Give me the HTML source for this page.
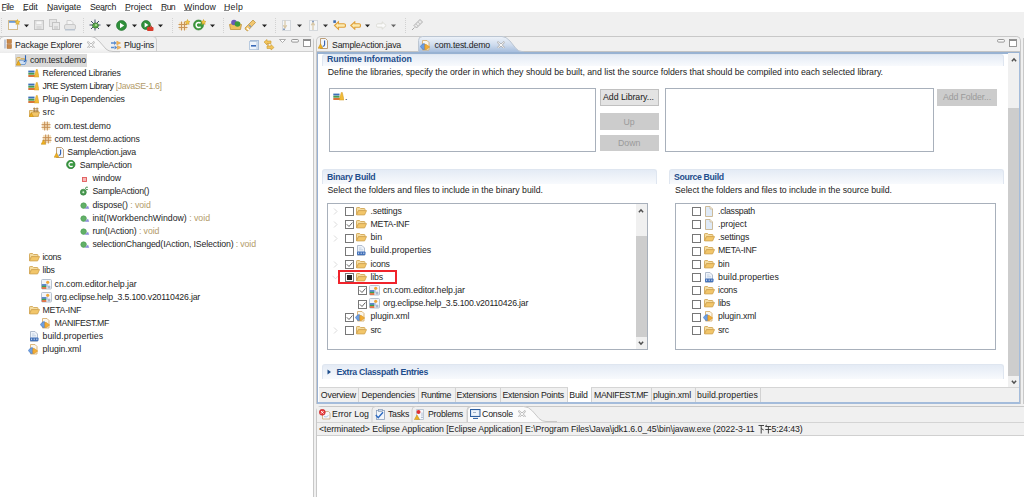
<!DOCTYPE html><html><head><meta charset="utf-8"><style>
html,body{margin:0;padding:0;}
body{width:1024px;height:497px;position:relative;overflow:hidden;background:#f0f0f0;font-family:"Liberation Sans",sans-serif;}
.t{position:absolute;white-space:nowrap;font-size:8.75px;line-height:10px;height:10px;}
#w{position:absolute;left:0;top:0;width:1024px;height:497px;overflow:hidden;}
</style></head><body><div id="w">
<div style="position:absolute;left:0px;top:0px;width:1024px;height:12px;background:#fff;"></div>
<div class="t" style="left:1.5px;top:1.60px;color:#222;letter-spacing:-0.477px;">File</div>
<div class="t" style="left:23px;top:1.60px;color:#222;letter-spacing:-0.12px;">Edit</div>
<div class="t" style="left:47px;top:1.60px;color:#222;letter-spacing:-0.068px;">Navigate</div>
<div class="t" style="left:90px;top:1.60px;color:#222;letter-spacing:-0.289px;">Search</div>
<div class="t" style="left:125px;top:1.60px;color:#222;letter-spacing:-0.033px;">Project</div>
<div class="t" style="left:161px;top:1.60px;color:#222;letter-spacing:-0.688px;">Run</div>
<div class="t" style="left:184px;top:1.60px;color:#222;letter-spacing:0.146px;">Window</div>
<div class="t" style="left:224px;top:1.60px;color:#222;letter-spacing:0.25px;">Help</div>
<div style="position:absolute;left:0px;top:12px;width:1024px;height:24px;background:#f0f0f0;"></div>
<div style="position:absolute;left:1px;top:18px;width:1px;height:1px;background:#d2d2d2;"></div>
<div style="position:absolute;left:1px;top:20px;width:1px;height:1px;background:#d2d2d2;"></div>
<div style="position:absolute;left:1px;top:22px;width:1px;height:1px;background:#d2d2d2;"></div>
<div style="position:absolute;left:1px;top:24px;width:1px;height:1px;background:#d2d2d2;"></div>
<div style="position:absolute;left:1px;top:26px;width:1px;height:1px;background:#d2d2d2;"></div>
<div style="position:absolute;left:1px;top:28px;width:1px;height:1px;background:#d2d2d2;"></div>
<div style="position:absolute;left:1px;top:30px;width:1px;height:1px;background:#d2d2d2;"></div>
<div style="position:absolute;left:1px;top:32px;width:1px;height:1px;background:#d2d2d2;"></div>
<svg style="position:absolute;left:8px;top:19px" width="12" height="12" viewBox="0 0 12 12"><rect x="0.5" y="1.5" width="9" height="9" fill="#f4f8fd" stroke="#d2bb8c"/><rect x="1" y="2" width="8" height="1.8" fill="#6a9ad4"/><path d="M9.5 0.5l0.8 1.8 1.7 0.2-1.3 1.2 0.4 1.8-1.6-0.9-1.6 0.9 0.4-1.8-1.3-1.2 1.7-0.2z" fill="#f5c542" stroke="#c99a20" stroke-width="0.5"/></svg>
<svg style="position:absolute;left:23.5px;top:23.5px" width="6" height="4" viewBox="0 0 6 4"><path d="M0 0.5h5L2.5 3.2z" fill="#222"/></svg>
<svg style="position:absolute;left:34px;top:20px" width="10" height="10" viewBox="0 0 10 10"><rect x="0.5" y="0.5" width="9" height="9" fill="#e6e6e6" stroke="#c4c4c4"/><rect x="2" y="1" width="6" height="3.5" fill="#f7f7f7" stroke="#d0d0d0" stroke-width="0.6"/><rect x="2.5" y="6" width="5" height="3" fill="#d8d8d8"/></svg>
<svg style="position:absolute;left:49px;top:19px" width="11" height="11" viewBox="0 0 11 11"><rect x="0.5" y="0.5" width="7" height="7" fill="#e6e6e6" stroke="#cacaca"/><rect x="3.5" y="3.5" width="7" height="7" fill="#e9e9e9" stroke="#c4c4c4"/><rect x="5" y="7" width="4" height="3" fill="#d5d5d5"/></svg>
<svg style="position:absolute;left:64px;top:20px" width="12" height="11" viewBox="0 0 12 11"><path d="M3 0.5h4l2 2v3H3z" fill="#f4f4f4" stroke="#cfcfcf"/><rect x="0.5" y="4.5" width="11" height="5" rx="1.5" fill="#e4e4e4" stroke="#c8c8c8"/><rect x="1" y="9" width="10" height="1.5" fill="#b9c3cf"/></svg>
<div style="position:absolute;left:83px;top:18px;width:1px;height:1px;background:#d2d2d2;"></div>
<div style="position:absolute;left:83px;top:20px;width:1px;height:1px;background:#d2d2d2;"></div>
<div style="position:absolute;left:83px;top:22px;width:1px;height:1px;background:#d2d2d2;"></div>
<div style="position:absolute;left:83px;top:24px;width:1px;height:1px;background:#d2d2d2;"></div>
<div style="position:absolute;left:83px;top:26px;width:1px;height:1px;background:#d2d2d2;"></div>
<div style="position:absolute;left:83px;top:28px;width:1px;height:1px;background:#d2d2d2;"></div>
<div style="position:absolute;left:83px;top:30px;width:1px;height:1px;background:#d2d2d2;"></div>
<div style="position:absolute;left:83px;top:32px;width:1px;height:1px;background:#d2d2d2;"></div>
<svg style="position:absolute;left:89px;top:19px" width="12" height="12" viewBox="0 0 12 12"><path d="M2 2l8 8M10 2l-8 8M6 0.5v11M0.5 6h11" stroke="#2a3a5a" stroke-width="0.9"/><ellipse cx="6.5" cy="6.5" rx="3" ry="2.6" fill="#5aa84a" stroke="#2e6a2e" stroke-width="0.6"/><circle cx="7" cy="6" r="1" fill="#b8e0a0"/></svg>
<svg style="position:absolute;left:105.5px;top:23.5px" width="6" height="4" viewBox="0 0 6 4"><path d="M0 0.5h5L2.5 3.2z" fill="#222"/></svg>
<svg style="position:absolute;left:116px;top:19.5px" width="11" height="11" viewBox="0 0 11 11"><circle cx="5.5" cy="5.5" r="5" fill="#2f8f3a" stroke="#1f6f2a" stroke-width="0.6"/><path d="M4 2.8v5.4L8.2 5.5z" fill="#fff"/></svg>
<svg style="position:absolute;left:132px;top:23.5px" width="6" height="4" viewBox="0 0 6 4"><path d="M0 0.5h5L2.5 3.2z" fill="#222"/></svg>
<svg style="position:absolute;left:141px;top:19.5px" width="13" height="12" viewBox="0 0 13 12"><circle cx="5" cy="5" r="4.5" fill="#2f8f3a" stroke="#1f6f2a" stroke-width="0.6"/><path d="M3.6 2.6v4.8L7.4 5z" fill="#fff"/><rect x="6" y="7" width="6.5" height="4" rx="1" fill="#d83a2a"/><path d="M8 7V6h2.5v1" stroke="#a02010" fill="none" stroke-width="0.7"/></svg>
<svg style="position:absolute;left:158px;top:23.5px" width="6" height="4" viewBox="0 0 6 4"><path d="M0 0.5h5L2.5 3.2z" fill="#222"/></svg>
<div style="position:absolute;left:172px;top:18px;width:1px;height:1px;background:#d2d2d2;"></div>
<div style="position:absolute;left:172px;top:20px;width:1px;height:1px;background:#d2d2d2;"></div>
<div style="position:absolute;left:172px;top:22px;width:1px;height:1px;background:#d2d2d2;"></div>
<div style="position:absolute;left:172px;top:24px;width:1px;height:1px;background:#d2d2d2;"></div>
<div style="position:absolute;left:172px;top:26px;width:1px;height:1px;background:#d2d2d2;"></div>
<div style="position:absolute;left:172px;top:28px;width:1px;height:1px;background:#d2d2d2;"></div>
<div style="position:absolute;left:172px;top:30px;width:1px;height:1px;background:#d2d2d2;"></div>
<div style="position:absolute;left:172px;top:32px;width:1px;height:1px;background:#d2d2d2;"></div>
<svg style="position:absolute;left:178px;top:19px" width="12" height="12" viewBox="0 0 12 12"><rect x="1" y="3" width="8" height="8" fill="#f6e4c4"/><path d="M3.5 2.5v9M6.5 2.5v9M0.5 5.5h9M0.5 8.5h9" stroke="#c8955a" stroke-width="1"/><path d="M9.5 0.5l0.8 1.8 1.7 0.2-1.3 1.2 0.4 1.8-1.6-0.9-1.6 0.9 0.4-1.8-1.3-1.2 1.7-0.2z" fill="#f5c542" stroke="#c99a20" stroke-width="0.5"/></svg>
<svg style="position:absolute;left:193px;top:19px" width="13" height="12" viewBox="0 0 13 12"><circle cx="5.5" cy="6" r="5" fill="#3d9a3d" stroke="#2a7a2a" stroke-width="0.6"/><path d="M7.6 4.2A2.6 2.6 0 1 0 7.6 7.8" fill="none" stroke="#fff" stroke-width="1.5"/><path d="M10.5 0.5l0.8 1.8 1.7 0.2-1.3 1.2 0.4 1.8-1.6-0.9-1.6 0.9 0.4-1.8-1.3-1.2 1.7-0.2z" fill="#f5c542" stroke="#c99a20" stroke-width="0.5"/></svg>
<svg style="position:absolute;left:209.5px;top:23.5px" width="6" height="4" viewBox="0 0 6 4"><path d="M0 0.5h5L2.5 3.2z" fill="#222"/></svg>
<div style="position:absolute;left:223px;top:18px;width:1px;height:1px;background:#d2d2d2;"></div>
<div style="position:absolute;left:223px;top:20px;width:1px;height:1px;background:#d2d2d2;"></div>
<div style="position:absolute;left:223px;top:22px;width:1px;height:1px;background:#d2d2d2;"></div>
<div style="position:absolute;left:223px;top:24px;width:1px;height:1px;background:#d2d2d2;"></div>
<div style="position:absolute;left:223px;top:26px;width:1px;height:1px;background:#d2d2d2;"></div>
<div style="position:absolute;left:223px;top:28px;width:1px;height:1px;background:#d2d2d2;"></div>
<div style="position:absolute;left:223px;top:30px;width:1px;height:1px;background:#d2d2d2;"></div>
<div style="position:absolute;left:223px;top:32px;width:1px;height:1px;background:#d2d2d2;"></div>
<svg style="position:absolute;left:228.5px;top:19px" width="13" height="12" viewBox="0 0 13 12"><path d="M0.5 5.5l6-2 6 2-1 5h-10z" fill="#f0c060" stroke="#b8862a" stroke-width="0.7"/><circle cx="5" cy="3.5" r="2.8" fill="#6a5ab8"/><circle cx="8.5" cy="5" r="2.8" fill="#3a9a3a"/></svg>
<svg style="position:absolute;left:244px;top:18.5px" width="13" height="13" viewBox="0 0 13 13"><path d="M1.5 10.5l2 1.5 8-8.5-2.5-2.5-8 8z" fill="#f2c770" stroke="#b88a30" stroke-width="0.7"/><path d="M3 9l2 2" stroke="#fff" stroke-width="1.5"/><path d="M5 6l2 2" stroke="#8a9ab0" stroke-width="1.5"/></svg>
<svg style="position:absolute;left:262px;top:23.5px" width="6" height="4" viewBox="0 0 6 4"><path d="M0 0.5h5L2.5 3.2z" fill="#222"/></svg>
<div style="position:absolute;left:275px;top:18px;width:1px;height:1px;background:#d2d2d2;"></div>
<div style="position:absolute;left:275px;top:20px;width:1px;height:1px;background:#d2d2d2;"></div>
<div style="position:absolute;left:275px;top:22px;width:1px;height:1px;background:#d2d2d2;"></div>
<div style="position:absolute;left:275px;top:24px;width:1px;height:1px;background:#d2d2d2;"></div>
<div style="position:absolute;left:275px;top:26px;width:1px;height:1px;background:#d2d2d2;"></div>
<div style="position:absolute;left:275px;top:28px;width:1px;height:1px;background:#d2d2d2;"></div>
<div style="position:absolute;left:275px;top:30px;width:1px;height:1px;background:#d2d2d2;"></div>
<div style="position:absolute;left:275px;top:32px;width:1px;height:1px;background:#d2d2d2;"></div>
<svg style="position:absolute;left:281px;top:19.5px" width="10" height="11" viewBox="0 0 10 11"><rect x="1.5" y="0.5" width="8" height="10" fill="#f4f6f8" stroke="#d4d8dc"/><path d="M4 0.5v6.5M2.3 5.3L4 8l1.7-2.7" fill="#efe6d0" stroke="#d8c8a8" stroke-width="1.2"/><rect x="2" y="8.5" width="2" height="1.5" fill="#8aa0c0"/></svg>
<svg style="position:absolute;left:297px;top:23.5px" width="6" height="4" viewBox="0 0 6 4"><path d="M0 0.5h5L2.5 3.2z" fill="#333"/></svg>
<svg style="position:absolute;left:308px;top:19.5px" width="10" height="11" viewBox="0 0 10 11"><rect x="1.5" y="0.5" width="8" height="10" fill="#f4f6f8" stroke="#d4d8dc"/><path d="M5 10V3.5M3.3 5.2L5 2.5l1.7 2.7" fill="#efe6d0" stroke="#d8c8a8" stroke-width="1.2"/><rect x="4" y="0.8" width="2" height="1.5" fill="#8aa0c0"/></svg>
<svg style="position:absolute;left:323px;top:23.5px" width="6" height="4" viewBox="0 0 6 4"><path d="M0 0.5h5L2.5 3.2z" fill="#333"/></svg>
<svg style="position:absolute;left:333px;top:19.5px" width="13" height="11" viewBox="0 0 13 11"><path d="M1.5 5.5L5.5 1.8v2h5.5q1.5 0 1.5 1.7t-1.5 1.8H5.5v2z" fill="#fbeab0" stroke="#e0a03a" stroke-width="1.1"/><rect x="0.3" y="0.3" width="2.6" height="2.6" fill="#3a6ab0"/></svg>
<svg style="position:absolute;left:349.5px;top:20.5px" width="11" height="9" viewBox="0 0 11 9"><path d="M0.8 4.5L4.8 0.8v2h4.5q1.2 0 1.2 1.7t-1.2 1.7H4.8v2z" fill="#fbeab0" stroke="#e0a03a" stroke-width="1.1"/></svg>
<svg style="position:absolute;left:365px;top:23.5px" width="6" height="4" viewBox="0 0 6 4"><path d="M0 0.5h5L2.5 3.2z" fill="#222"/></svg>
<svg style="position:absolute;left:376px;top:20.5px" width="11" height="9" viewBox="0 0 11 9"><path d="M10.2 4.5L6.2 0.8v2H1.7q-1.2 0-1.2 1.7t1.2 1.7h4.5v2z" fill="#fafafa" stroke="#dcdcd6" stroke-width="1"/></svg>
<svg style="position:absolute;left:391px;top:23.5px" width="6" height="4" viewBox="0 0 6 4"><path d="M0 0.5h5L2.5 3.2z" fill="#666"/></svg>
<div style="position:absolute;left:405px;top:18px;width:1px;height:1px;background:#d2d2d2;"></div>
<div style="position:absolute;left:405px;top:20px;width:1px;height:1px;background:#d2d2d2;"></div>
<div style="position:absolute;left:405px;top:22px;width:1px;height:1px;background:#d2d2d2;"></div>
<div style="position:absolute;left:405px;top:24px;width:1px;height:1px;background:#d2d2d2;"></div>
<div style="position:absolute;left:405px;top:26px;width:1px;height:1px;background:#d2d2d2;"></div>
<div style="position:absolute;left:405px;top:28px;width:1px;height:1px;background:#d2d2d2;"></div>
<div style="position:absolute;left:405px;top:30px;width:1px;height:1px;background:#d2d2d2;"></div>
<div style="position:absolute;left:405px;top:32px;width:1px;height:1px;background:#d2d2d2;"></div>
<svg style="position:absolute;left:411px;top:19px" width="12" height="12" viewBox="0 0 12 12"><path d="M1 11l2.5-2.5" stroke="#aaa" stroke-width="1"/><path d="M3 6.5l2.5 2.5 6-6-2.5-2.5z" fill="#e8e8e8" stroke="#a8a8a8" stroke-width="0.9"/><path d="M5 5l2 2M7 3l2 2" stroke="#b8b8b8" stroke-width="0.7"/></svg>
<div style="position:absolute;left:1.5px;top:10px;width:4px;height:1px;background:#8a8a8a;"></div>
<div style="position:absolute;left:23px;top:10px;width:4px;height:1px;background:#8a8a8a;"></div>
<div style="position:absolute;left:47px;top:10px;width:5px;height:1px;background:#8a8a8a;"></div>
<div style="position:absolute;left:102px;top:10px;width:4px;height:1px;background:#8a8a8a;"></div>
<div style="position:absolute;left:125px;top:10px;width:5px;height:1px;background:#8a8a8a;"></div>
<div style="position:absolute;left:161px;top:10px;width:5px;height:1px;background:#8a8a8a;"></div>
<div style="position:absolute;left:184px;top:10px;width:8px;height:1px;background:#8a8a8a;"></div>
<div style="position:absolute;left:224px;top:10px;width:5px;height:1px;background:#8a8a8a;"></div>
<div style="position:absolute;left:0px;top:36px;width:314px;height:462px;box-sizing:border-box;border:1px solid #c8c8c8;border-left:none;border-bottom:none;border-top-right-radius:5px;background:#fff;"></div>
<div style="position:absolute;left:0px;top:37px;width:313px;height:14px;background:#f0f0f0;"></div>
<div style="position:absolute;left:113px;top:51px;width:200px;height:1px;background:#cfcfcf;"></div>
<svg style="position:absolute;left:0px;top:36px" width="120" height="17" viewBox="0 0 120 17"><defs><linearGradient id="gl" x1="0" y1="0" x2="0" y2="1"><stop offset="0" stop-color="#fafafa"/><stop offset="0.7" stop-color="#f7f7f7"/><stop offset="1" stop-color="#ebebeb"/></linearGradient></defs><path d="M0 3.5Q0.5 0.5 4 0.5H91Q95 0.5 99 5L106 13Q108.5 15.5 113 15.5H120V17H0z" fill="url(#gl)" stroke="none"/><path d="M0 3.5Q0.5 0.5 4 0.5H91Q95 0.5 99 5L106 13Q108.5 15.5 113 15.5H120" fill="none" stroke="#c4c4c4" stroke-width="1"/></svg>
<svg style="position:absolute;left:148px;top:36px" width="10" height="16" viewBox="0 0 10 16"><path d="M0 0.5H5Q8.5 0.5 8.5 4V15.5" fill="none" stroke="#cdcdcd"/></svg>
<svg style="position:absolute;left:4px;top:39px" width="8" height="10" viewBox="0 0 8 10"><rect x="0.5" y="0.5" width="1" height="9" fill="#8a9ab8"/><rect x="3" y="0.5" width="4.5" height="4" fill="#c8894a" stroke="#a86a30" stroke-width="0.5"/><rect x="3" y="5.5" width="4.5" height="4" fill="#c8894a" stroke="#a86a30" stroke-width="0.5"/></svg>
<svg style="position:absolute;left:87px;top:41px" width="8" height="7" viewBox="0 0 8 7"><path d="M1 0.5l3 2.5 3-2.5 0.8 0.8-2.5 2.7 2.5 2.7-0.8 0.8-3-2.5-3 2.5-0.8-0.8 2.5-2.7-2.5-2.7z" fill="#fff" stroke="#9a9a9a" stroke-width="0.7"/></svg>
<svg style="position:absolute;left:111px;top:39.5px" width="11" height="10" viewBox="0 0 11 10"><path d="M0 3h3M0 7.5h3" stroke="#5a8cd0" stroke-width="1.6"/><path d="M3 1l2.8 2-2.8 2zM3.5 5.5l2.8 2-2.8 2z" fill="#5a8cd0"/><path d="M5.8 1.2l3.8 1.8-3.8 1.8zM6.3 5.7l3.8 1.8-3.8 1.8z" fill="#f0b860" stroke="#d89030" stroke-width="0.5"/></svg>
<svg style="position:absolute;left:249px;top:39.5px" width="10" height="10" viewBox="0 0 10 10"><rect x="1.5" y="0.5" width="8" height="9" fill="#dfeaf6" stroke="#a8bcd6"/><rect x="0.5" y="1.5" width="7.5" height="8" fill="#eef4fb" stroke="#b9cbe0"/><rect x="2" y="5" width="5" height="1.6" fill="#3a6ab8"/></svg>
<svg style="position:absolute;left:263px;top:39px" width="12" height="12" viewBox="0 0 12 12"><path d="M1 3l3-2.5v1.5h4v2.5H4v1.5z" fill="#f2c45a" stroke="#c99a30" stroke-width="0.6"/><path d="M11 8.5l-3 2.5V9.5H4V7h4V5.5z" fill="#f2c45a" stroke="#c99a30" stroke-width="0.6"/><path d="M5 4v3" stroke="#d4a040" stroke-width="1.2"/></svg>
<svg style="position:absolute;left:278.5px;top:39px" width="7" height="4" viewBox="0 0 7 4"><path d="M0.5 0.5h6L3.5 3.5z" fill="#fff" stroke="#9a9a9a" stroke-width="0.8"/></svg>
<svg style="position:absolute;left:291px;top:39px" width="8" height="4" viewBox="0 0 8 4"><rect x="0.5" y="0.5" width="7" height="2.6" rx="1.2" fill="#fafafa" stroke="#8c8c8c" stroke-width="0.9"/></svg>
<svg style="position:absolute;left:303px;top:39px" width="8" height="8" viewBox="0 0 8 8"><rect x="0.5" y="0.5" width="7" height="7" fill="#fff" stroke="#8c8c8c" stroke-width="0.9"/><rect x="0.5" y="0.5" width="7" height="1.5" fill="#8c8c8c"/></svg>
<div class="t" style="left:15px;top:40.00px;color:#222;letter-spacing:-0.13px;">Package Explorer</div>
<div class="t" style="left:124px;top:40.00px;color:#222;letter-spacing:-0.203px;">Plug-ins</div>
<div style="position:absolute;left:15px;top:54px;width:72px;height:13px;background:#d9d9d9;"></div>
<div class="t" style="left:30px;top:54.70px;color:#1e1e1e;letter-spacing:-0.107px;">com.test.demo</div>
<svg style="position:absolute;left:16px;top:55px" width="12" height="11" viewBox="0 0 12 11"><path d="M0.5 3.5Q0.5 2.5 1.5 2.5H4L5 3.5H8.5V5H3L1.2 9.5z" fill="#f4dca0" stroke="#d3a756" stroke-width="0.8"/><path d="M1.5 9.5L3.2 5.2H10.8L9 9.5z" fill="#cfe0f4" stroke="#5e8fcc" stroke-width="0.8"/><path d="M9.5 0.3v5q0 1.5-1.8 1.5" fill="none" stroke="#2b63b5" stroke-width="1.1"/><path d="M2.5 5.8L4.8 10.2H0.2z" fill="#f0b020" stroke="#c08a10" stroke-width="0.5"/></svg>
<div class="t" style="left:42.5px;top:67.87px;color:#1e1e1e;letter-spacing:-0.147px;">Referenced Libraries</div>
<svg style="position:absolute;left:28px;top:69px" width="11" height="9" viewBox="0 0 11 9"><rect x="0.3" y="1.6" width="6.2" height="1.9" fill="#3a6fb8"/><rect x="0.3" y="3.8" width="6.2" height="1.9" fill="#4a9a50"/><rect x="0.3" y="6" width="7" height="2" fill="#d8743a"/><path d="M6.2 8L8.3 0.4h1L11 8z" fill="#f2bc3a" stroke="#d09a20" stroke-width="0.5"/></svg>
<div class="t" style="left:42.5px;top:81.04px;color:#1e1e1e;letter-spacing:-0.347px;">JRE System Library <span style="color:#b39b6a">[JavaSE-1.6]</span></div>
<svg style="position:absolute;left:28px;top:82px" width="11" height="9" viewBox="0 0 11 9"><rect x="0.3" y="1.6" width="6.2" height="1.9" fill="#3a6fb8"/><rect x="0.3" y="3.8" width="6.2" height="1.9" fill="#4a9a50"/><rect x="0.3" y="6" width="7" height="2" fill="#d8743a"/><path d="M6.2 8L8.3 0.4h1L11 8z" fill="#f2bc3a" stroke="#d09a20" stroke-width="0.5"/></svg>
<div class="t" style="left:42.5px;top:94.21px;color:#1e1e1e;letter-spacing:-0.166px;">Plug-in Dependencies</div>
<svg style="position:absolute;left:28px;top:95px" width="11" height="9" viewBox="0 0 11 9"><rect x="0.3" y="1.6" width="6.2" height="1.9" fill="#3a6fb8"/><rect x="0.3" y="3.8" width="6.2" height="1.9" fill="#4a9a50"/><rect x="0.3" y="6" width="7" height="2" fill="#d8743a"/><path d="M6.2 8L8.3 0.4h1L11 8z" fill="#f2bc3a" stroke="#d09a20" stroke-width="0.5"/></svg>
<div class="t" style="left:42.5px;top:107.38px;color:#1e1e1e;letter-spacing:0.276px;">src</div>
<svg style="position:absolute;left:29px;top:107px" width="11" height="10" viewBox="0 0 11 10"><path d="M0.5 3.5h3l1 1h5v4.8h-9z" fill="#f4dca0" stroke="#d3a756" stroke-width="0.9"/><path d="M1 9.3l1.5-4h8l-1.5 4z" fill="#f2c66a" stroke="#d3a756" stroke-width="0.9"/><path d="M5.3 0.5v4.5M8.1 0.5v4.5M4 1.8h5.5M4 3.8h5.5" stroke="#a57a40" stroke-width="0.9"/><path d="M2.3 5.8L4.4 9.8H0.2z" fill="#f0b020" stroke="#c08a10" stroke-width="0.5"/></svg>
<div class="t" style="left:54.6px;top:120.55px;color:#1e1e1e;letter-spacing:-0.099px;">com.test.demo</div>
<svg style="position:absolute;left:41px;top:121px" width="10" height="10" viewBox="0 0 10 10"><rect x="1" y="1" width="8" height="8" fill="#f7e6c8"/><path d="M3.7 0.5v9M6.3 0.5v9M0.5 3.7h9M0.5 6.3h9" stroke="#c48c50" stroke-width="1"/></svg>
<div class="t" style="left:54.6px;top:133.72px;color:#1e1e1e;letter-spacing:-0.107px;">com.test.demo.actions</div>
<svg style="position:absolute;left:41px;top:134px" width="11" height="11" viewBox="0 0 11 11"><rect x="2" y="1" width="8" height="8" fill="#f7e6c8"/><path d="M4.7 0.5v9M7.3 0.5v9M1.5 3.7h9M1.5 6.3h9" stroke="#c48c50" stroke-width="1"/><path d="M2.5 5.8L4.8 10.3H0.2z" fill="#f0b020" stroke="#c08a10" stroke-width="0.5"/></svg>
<div class="t" style="left:67.3px;top:146.89px;color:#1e1e1e;letter-spacing:-0.228px;">SampleAction.java</div>
<svg style="position:absolute;left:54px;top:147px" width="11" height="11" viewBox="0 0 11 11"><path d="M2.5 0.5h5l2 2v8h-7z" fill="#f4f7fc" stroke="#b8956a" stroke-width="0.9"/><path d="M6.6 2.5v4.3q0 1.6-1.9 1.6" fill="none" stroke="#2f5fb0" stroke-width="1.1"/><path d="M2.5 5.8L4.8 10.3H0.2z" fill="#f0b020" stroke="#c08a10" stroke-width="0.5"/></svg>
<div class="t" style="left:79.8px;top:160.06px;color:#1e1e1e;letter-spacing:-0.183px;">SampleAction</div>
<svg style="position:absolute;left:66px;top:160px" width="10" height="9" viewBox="0 0 10 9"><circle cx="4.8" cy="4.5" r="4.2" fill="#3a9a42" stroke="#24782c" stroke-width="0.7"/><path d="M6.6 3.1A2.1 2.1 0 1 0 6.6 5.9" fill="none" stroke="#fff" stroke-width="1.2"/></svg>
<div class="t" style="left:92.4px;top:173.23px;color:#1e1e1e;letter-spacing:-0.098px;">window</div>
<svg style="position:absolute;left:82px;top:177px" width="5" height="5" viewBox="0 0 5 5"><rect x="0.5" y="0.5" width="4" height="4" fill="#f7b8b8" stroke="#e05a5a" stroke-width="0.9"/></svg>
<div class="t" style="left:92.4px;top:186.40px;color:#1e1e1e;letter-spacing:-0.216px;">SampleAction()</div>
<svg style="position:absolute;left:80px;top:186px" width="10" height="10" viewBox="0 0 10 10"><circle cx="3.3" cy="6.2" r="3" fill="#4a9a52" stroke="#2e7a36" stroke-width="0.6"/><circle cx="3.3" cy="6.2" r="1" fill="#d8f0d8"/><path d="M7.8 1.3q-1.8-1-2.3 1 0.2 1.8 2.3 1.3" fill="none" stroke="#3a8a44" stroke-width="1"/></svg>
<div class="t" style="left:92.4px;top:199.57px;color:#1e1e1e;letter-spacing:-0.065px;">dispose() <span style="color:#b39b6a">: void</span></div>
<svg style="position:absolute;left:80px;top:202px" width="10" height="8" viewBox="0 0 10 8"><circle cx="3.6" cy="3.6" r="2.8" fill="#62b068" stroke="#4a9a52" stroke-width="0.6"/><path d="M4.6 6.8L8 3.8 9.2 6.8z" fill="#8a8ad8"/></svg>
<div class="t" style="left:92.4px;top:212.74px;color:#1e1e1e;letter-spacing:-0.014px;">init(IWorkbenchWindow) <span style="color:#b39b6a">: void</span></div>
<svg style="position:absolute;left:80px;top:215px" width="10" height="8" viewBox="0 0 10 8"><circle cx="3.6" cy="3.6" r="2.8" fill="#62b068" stroke="#4a9a52" stroke-width="0.6"/><path d="M4.6 6.8L8 3.8 9.2 6.8z" fill="#8a8ad8"/></svg>
<div class="t" style="left:92.4px;top:225.91px;color:#1e1e1e;letter-spacing:-0.088px;">run(IAction) <span style="color:#b39b6a">: void</span></div>
<svg style="position:absolute;left:80px;top:228px" width="10" height="8" viewBox="0 0 10 8"><circle cx="3.6" cy="3.6" r="2.8" fill="#62b068" stroke="#4a9a52" stroke-width="0.6"/><path d="M4.6 6.8L8 3.8 9.2 6.8z" fill="#8a8ad8"/></svg>
<div class="t" style="left:92.4px;top:239.08px;color:#1e1e1e;letter-spacing:-0.131px;">selectionChanged(IAction, ISelection) <span style="color:#b39b6a">: void</span></div>
<svg style="position:absolute;left:80px;top:241px" width="10" height="8" viewBox="0 0 10 8"><circle cx="3.6" cy="3.6" r="2.8" fill="#62b068" stroke="#4a9a52" stroke-width="0.6"/><path d="M4.6 6.8L8 3.8 9.2 6.8z" fill="#8a8ad8"/></svg>
<div class="t" style="left:42.5px;top:252.25px;color:#1e1e1e;letter-spacing:-0.367px;">icons</div>
<svg style="position:absolute;left:29px;top:253px" width="11" height="9" viewBox="0 0 11 9"><path d="M0.5 1.2Q0.5 0.5 1.2 0.5H3.6L4.6 1.5H8.3Q9 1.5 9 2.2V3.5H2.6L0.5 7.8z" fill="#f4dca0" stroke="#d3a756" stroke-width="0.9"/><path d="M0.6 7.9L2.5 3.6H10.5L8.6 7.9z" fill="#f2c66a" stroke="#d3a756" stroke-width="0.9"/></svg>
<div class="t" style="left:42.5px;top:265.42px;color:#1e1e1e;letter-spacing:-0.21px;">libs</div>
<svg style="position:absolute;left:29px;top:266px" width="11" height="9" viewBox="0 0 11 9"><path d="M0.5 1.2Q0.5 0.5 1.2 0.5H3.6L4.6 1.5H8.3Q9 1.5 9 2.2V3.5H2.6L0.5 7.8z" fill="#f4dca0" stroke="#d3a756" stroke-width="0.9"/><path d="M0.6 7.9L2.5 3.6H10.5L8.6 7.9z" fill="#f2c66a" stroke="#d3a756" stroke-width="0.9"/></svg>
<div class="t" style="left:54.6px;top:278.59px;color:#1e1e1e;letter-spacing:-0.053px;">cn.com.editor.help.jar</div>
<svg style="position:absolute;left:41px;top:279px" width="11" height="11" viewBox="0 0 11 11"><rect x="0.5" y="0.5" width="10" height="9.5" rx="1" fill="#f2f5fa" stroke="#b0bccb" stroke-width="0.9"/><rect x="0.8" y="5.2" width="4.5" height="1.6" fill="#3a6fc0"/><rect x="0.8" y="6.8" width="4.5" height="1.4" fill="#3aa050"/><rect x="0.8" y="8.2" width="4.5" height="1.6" fill="#e0602a"/><circle cx="6.7" cy="3.3" r="1.6" fill="#f0a838"/><path d="M6 4.8v3" stroke="#8aa8d8" stroke-width="1"/><circle cx="8" cy="8" r="1.5" fill="#a8b8cc"/></svg>
<div class="t" style="left:54.6px;top:291.76px;color:#1e1e1e;letter-spacing:-0.187px;">org.eclipse.help_3.5.100.v20110426.jar</div>
<svg style="position:absolute;left:41px;top:292px" width="11" height="11" viewBox="0 0 11 11"><rect x="0.5" y="0.5" width="10" height="9.5" rx="1" fill="#f2f5fa" stroke="#b0bccb" stroke-width="0.9"/><rect x="0.8" y="5.2" width="4.5" height="1.6" fill="#3a6fc0"/><rect x="0.8" y="6.8" width="4.5" height="1.4" fill="#3aa050"/><rect x="0.8" y="8.2" width="4.5" height="1.6" fill="#e0602a"/><circle cx="6.7" cy="3.3" r="1.6" fill="#f0a838"/><path d="M6 4.8v3" stroke="#8aa8d8" stroke-width="1"/><circle cx="8" cy="8" r="1.5" fill="#a8b8cc"/></svg>
<div class="t" style="left:42.5px;top:304.93px;color:#1e1e1e;letter-spacing:-0.246px;">META-INF</div>
<svg style="position:absolute;left:29px;top:306px" width="11" height="9" viewBox="0 0 11 9"><path d="M0.5 1.2Q0.5 0.5 1.2 0.5H3.6L4.6 1.5H8.3Q9 1.5 9 2.2V3.5H2.6L0.5 7.8z" fill="#f4dca0" stroke="#d3a756" stroke-width="0.9"/><path d="M0.6 7.9L2.5 3.6H10.5L8.6 7.9z" fill="#f2c66a" stroke="#d3a756" stroke-width="0.9"/></svg>
<div class="t" style="left:54.6px;top:318.10px;color:#1e1e1e;letter-spacing:-0.368px;">MANIFEST.MF</div>
<svg style="position:absolute;left:40px;top:318px" width="11" height="11" viewBox="0 0 11 11"><path d="M2.5 0.5h4.5l2 2v7.5h-6.5z" fill="#fbf6ea" stroke="#d8b070" stroke-width="0.9"/><path d="M0.3 6.5L2.8 3.8h2v5.6h-2z" fill="#6c9ee0" stroke="#3f74c0" stroke-width="0.6"/><path d="M4.8 4.5h1.5l3.4 2.5-3.4 2.5H4.8z" fill="#f2ac34" stroke="#d08a18" stroke-width="0.5"/></svg>
<div class="t" style="left:42.5px;top:331.27px;color:#1e1e1e;letter-spacing:0.054px;">build.properties</div>
<svg style="position:absolute;left:29px;top:331px" width="10" height="11" viewBox="0 0 10 11"><path d="M1.5 0.5h4.5l2.5 2.5v7.5h-7z" fill="#eef3fa" stroke="#a9b6c8" stroke-width="0.9"/><path d="M3 3h2.5M3 4.8h4" stroke="#b8c8dc" stroke-width="0.8"/><rect x="1" y="6.5" width="8.5" height="3.5" rx="0.8" fill="#3f6fb8"/><path d="M2.6 7.5v1.6M5.2 7.5v1.6M7.8 7.5v1.6" stroke="#e8eef8" stroke-width="0.8"/></svg>
<div class="t" style="left:42.5px;top:344.44px;color:#1e1e1e;letter-spacing:-0.091px;">plugin.xml</div>
<svg style="position:absolute;left:28px;top:344px" width="11" height="11" viewBox="0 0 11 11"><path d="M2.5 0.5h4.5l2 2v7.5h-6.5z" fill="#fbf6ea" stroke="#d8b070" stroke-width="0.9"/><path d="M0.3 6.5L2.8 3.8h2v5.6h-2z" fill="#6c9ee0" stroke="#3f74c0" stroke-width="0.6"/><path d="M4.8 4.5h1.5l3.4 2.5-3.4 2.5H4.8z" fill="#f2ac34" stroke="#d08a18" stroke-width="0.5"/></svg>
<div style="position:absolute;left:316px;top:36px;width:705px;height:368px;box-sizing:border-box;border:1px solid #c8c8c8;border-bottom:none;border-top-left-radius:5px;border-top-right-radius:5px;background:#f0f0f0;"></div>
<svg style="position:absolute;left:418px;top:36px" width="110" height="17" viewBox="0 0 110 17"><defs><linearGradient id="ga" x1="0" y1="0" x2="0" y2="1"><stop offset="0" stop-color="#eef3f9"/><stop offset="0.5" stop-color="#cfdcee"/><stop offset="1" stop-color="#a0b9da"/></linearGradient></defs><path d="M0.5 17V4.5Q0.5 0.5 4.5 0.5H84Q88 0.5 92 5L98 12.5Q100.5 15.5 104 15.5H110V17z" fill="url(#ga)"/><path d="M0.5 17V4.5Q0.5 0.5 4.5 0.5H84Q88 0.5 92 5L98 12.5Q100.5 15.5 104 15.5H110" fill="none" stroke="#bcc6d2" stroke-width="1"/></svg>
<div class="t" style="left:332px;top:40.00px;color:#222;letter-spacing:-0.205px;">SampleAction.java</div>
<div class="t" style="left:434.5px;top:40.00px;color:#222;letter-spacing:-0.145px;">com.test.demo</div>
<svg style="position:absolute;left:318px;top:38px" width="11" height="11" viewBox="0 0 11 11"><path d="M2.5 0.5h5l2 2v8h-7z" fill="#f4f7fc" stroke="#b8956a" stroke-width="0.9"/><path d="M6.6 2.5v4.3q0 1.6-1.9 1.6" fill="none" stroke="#2f5fb0" stroke-width="1.1"/><path d="M2.5 5.8L4.8 10.3H0.2z" fill="#f0b020" stroke="#c08a10" stroke-width="0.5"/></svg>
<svg style="position:absolute;left:420px;top:40px" width="11" height="11" viewBox="0 0 11 11"><path d="M2.5 0.5h4.5l2 2v7.5h-6.5z" fill="#fbf6ea" stroke="#d8b070" stroke-width="0.9"/><path d="M0.3 6.5L2.8 3.8h2v5.6h-2z" fill="#6c9ee0" stroke="#3f74c0" stroke-width="0.6"/><path d="M4.8 4.5h1.5l3.4 2.5-3.4 2.5H4.8z" fill="#f2ac34" stroke="#d08a18" stroke-width="0.5"/></svg>
<svg style="position:absolute;left:496.5px;top:41px" width="8" height="7" viewBox="0 0 8 7"><path d="M1 0.5l3 2.5 3-2.5 0.8 0.8-2.5 2.7 2.5 2.7-0.8 0.8-3-2.5-3 2.5-0.8-0.8 2.5-2.7-2.5-2.7z" fill="#fff" stroke="#9a9a9a" stroke-width="0.7"/></svg>
<svg style="position:absolute;left:997px;top:39px" width="8" height="4" viewBox="0 0 8 4"><rect x="0.5" y="0.5" width="7" height="2.6" rx="1.2" fill="#fafafa" stroke="#8c8c8c" stroke-width="0.9"/></svg>
<svg style="position:absolute;left:1009px;top:39px" width="8" height="8" viewBox="0 0 8 8"><rect x="0.5" y="0.5" width="7" height="7" fill="#fff" stroke="#8c8c8c" stroke-width="0.9"/><rect x="0.5" y="0.5" width="7" height="1.5" fill="#8c8c8c"/></svg>
<div style="position:absolute;left:317px;top:52px;width:703px;height:352px;box-sizing:border-box;border:2px solid #a4bcdb;border-left:1px solid #98b0d2;border-top-color:#98b2d2;background:#fff;"></div>
<div style="position:absolute;left:317px;top:51px;width:101px;height:1px;background:#c4c4c4;"></div>
<div style="position:absolute;left:524px;top:51px;width:496px;height:1px;background:#c4c4c4;"></div>
<div style="position:absolute;left:322px;top:54px;width:682px;height:12px;box-sizing:border-box;border:1px solid #dfe6f0;border-bottom:none;border-top-left-radius:3px;border-top-right-radius:3px;background:linear-gradient(#e4ebf5,#f8fafd);"></div>
<div class="t" style="left:327px;top:53.80px;color:#1f4e8c;font-weight:bold;letter-spacing:-0.04px;">Runtime Information</div>
<div class="t" style="left:327.8px;top:67.00px;color:#222;letter-spacing:0.003px;">Define the libraries, specify the order in which they should be built, and list the source folders that should be compiled into each selected library.</div>
<div style="position:absolute;left:329px;top:88px;width:267px;height:64px;box-sizing:border-box;border:1px solid #a8b0bb;background:#fff;"></div>
<svg style="position:absolute;left:333px;top:92px" width="11" height="9" viewBox="0 0 11 9"><rect x="0.3" y="1.6" width="6.2" height="1.9" fill="#3a6fb8"/><rect x="0.3" y="3.8" width="6.2" height="1.9" fill="#4a9a50"/><rect x="0.3" y="6" width="7" height="2" fill="#d8743a"/><path d="M6.2 8L8.3 0.4h1L11 8z" fill="#f2bc3a" stroke="#d09a20" stroke-width="0.5"/></svg>
<div class="t" style="left:345px;top:92.00px;color:#222;">.</div>
<div style="position:absolute;left:599.5px;top:89px;width:59.5px;height:16.5px;box-sizing:border-box;border:1px solid #c0c0c0;background:#e3e3e3;"></div>
<div class="t" style="left:603px;top:91.80px;color:#1a1a1a;letter-spacing:-0.028px;">Add Library...</div>
<div style="position:absolute;left:599.5px;top:113px;width:59.5px;height:16.5px;background:#cccccc;"></div>
<div class="t" style="left:623.5px;top:117.00px;color:#9a9a9a;">Up</div>
<div style="position:absolute;left:599.5px;top:134.5px;width:59.5px;height:16.5px;background:#cccccc;"></div>
<div class="t" style="left:618px;top:138.00px;color:#9a9a9a;">Down</div>
<div style="position:absolute;left:665px;top:88px;width:268.5px;height:64px;box-sizing:border-box;border:1px solid #a8b0bb;background:#fff;"></div>
<div style="position:absolute;left:937px;top:89px;width:59.5px;height:16.5px;background:#cccccc;"></div>
<div class="t" style="left:943px;top:91.80px;color:#9a9a9a;letter-spacing:-0.125px;">Add Folder...</div>
<div style="position:absolute;left:322px;top:169px;width:335px;height:14.5px;box-sizing:border-box;border:1px solid #dfe6f0;border-bottom:none;border-top-left-radius:3px;border-top-right-radius:3px;background:linear-gradient(#e4ebf5,#f8fafd);"></div>
<div class="t" style="left:327px;top:171.50px;color:#1f4e8c;font-weight:bold;letter-spacing:-0.262px;">Binary Build</div>
<div class="t" style="left:327.5px;top:185.00px;color:#222;letter-spacing:-0.009px;">Select the folders and files to include in the binary build.</div>
<div style="position:absolute;left:669px;top:169px;width:335px;height:14.5px;box-sizing:border-box;border:1px solid #dfe6f0;border-bottom:none;border-top-left-radius:3px;border-top-right-radius:3px;background:linear-gradient(#e4ebf5,#f8fafd);"></div>
<div class="t" style="left:674px;top:171.50px;color:#1f4e8c;font-weight:bold;letter-spacing:-0.356px;">Source Build</div>
<div class="t" style="left:675px;top:185.00px;color:#222;letter-spacing:-0.023px;">Select the folders and files to include in the source build.</div>
<div style="position:absolute;left:327px;top:203px;width:321px;height:147px;box-sizing:border-box;border:1px solid #a8b0bb;background:#fff;"></div>
<div style="position:absolute;left:636px;top:204px;width:10.5px;height:145px;background:#f0f0f0;"></div>
<div style="position:absolute;left:636px;top:236px;width:10.5px;height:101px;background:#cdcdcd;"></div>
<svg style="position:absolute;left:638px;top:207.5px" width="7" height="5" viewBox="0 0 7 5"><path d="M0.9 4.2L3 1.8 5.1 4.2" fill="none" stroke="#505050" stroke-width="1.5"/></svg>
<svg style="position:absolute;left:638px;top:340.5px" width="7" height="5" viewBox="0 0 7 5"><path d="M0.9 0.8L3 3.2 5.1 0.8" fill="none" stroke="#505050" stroke-width="1.5"/></svg>
<div class="t" style="left:370.5px;top:205.80px;color:#1e1e1e;letter-spacing:-0.155px;">.settings</div>
<div style="position:absolute;left:345px;top:207px;width:7px;height:7px;border:1px solid #777;background:#fff;"></div>
<svg style="position:absolute;left:356px;top:207px" width="11" height="9" viewBox="0 0 11 9"><path d="M0.5 1.2Q0.5 0.5 1.2 0.5H3.6L4.6 1.5H8.3Q9 1.5 9 2.2V3.5H2.6L0.5 7.8z" fill="#f4dca0" stroke="#d3a756" stroke-width="0.9"/><path d="M0.6 7.9L2.5 3.6H10.5L8.6 7.9z" fill="#f2c66a" stroke="#d3a756" stroke-width="0.9"/></svg>
<svg style="position:absolute;left:333px;top:208px" width="5" height="7" viewBox="0 0 5 7"><path d="M1 0.5l3 3-3 3" fill="none" stroke="#dadada" stroke-width="1"/></svg>
<div class="t" style="left:370.5px;top:219.00px;color:#1e1e1e;letter-spacing:-0.234px;">META-INF</div>
<div style="position:absolute;left:345px;top:220px;width:7px;height:7px;border:1px solid #777;background:#fff;"></div>
<svg style="position:absolute;left:345px;top:220px" width="9" height="9" viewBox="0 0 9 9"><path d="M1.8 4.3l2.2 2.2 3.4-4" fill="none" stroke="#666" stroke-width="1"/></svg>
<svg style="position:absolute;left:356px;top:220px" width="11" height="9" viewBox="0 0 11 9"><path d="M0.5 1.2Q0.5 0.5 1.2 0.5H3.6L4.6 1.5H8.3Q9 1.5 9 2.2V3.5H2.6L0.5 7.8z" fill="#f4dca0" stroke="#d3a756" stroke-width="0.9"/><path d="M0.6 7.9L2.5 3.6H10.5L8.6 7.9z" fill="#f2c66a" stroke="#d3a756" stroke-width="0.9"/></svg>
<svg style="position:absolute;left:333px;top:221px" width="5" height="7" viewBox="0 0 5 7"><path d="M1 0.5l3 3-3 3" fill="none" stroke="#dadada" stroke-width="1"/></svg>
<div class="t" style="left:370.5px;top:232.20px;color:#1e1e1e;letter-spacing:-0.062px;">bin</div>
<div style="position:absolute;left:345px;top:234px;width:7px;height:7px;border:1px solid #777;background:#fff;"></div>
<svg style="position:absolute;left:356px;top:233px" width="11" height="9" viewBox="0 0 11 9"><path d="M0.5 1.2Q0.5 0.5 1.2 0.5H3.6L4.6 1.5H8.3Q9 1.5 9 2.2V3.5H2.6L0.5 7.8z" fill="#f4dca0" stroke="#d3a756" stroke-width="0.9"/><path d="M0.6 7.9L2.5 3.6H10.5L8.6 7.9z" fill="#f2c66a" stroke="#d3a756" stroke-width="0.9"/></svg>
<svg style="position:absolute;left:333px;top:235px" width="5" height="7" viewBox="0 0 5 7"><path d="M1 0.5l3 3-3 3" fill="none" stroke="#dadada" stroke-width="1"/></svg>
<div class="t" style="left:370.5px;top:245.40px;color:#1e1e1e;letter-spacing:0.061px;">build.properties</div>
<div style="position:absolute;left:345px;top:247px;width:7px;height:7px;border:1px solid #777;background:#fff;"></div>
<svg style="position:absolute;left:356px;top:245px" width="10" height="11" viewBox="0 0 10 11"><path d="M1.5 0.5h4.5l2.5 2.5v7.5h-7z" fill="#eef3fa" stroke="#a9b6c8" stroke-width="0.9"/><path d="M3 3h2.5M3 4.8h4" stroke="#b8c8dc" stroke-width="0.8"/><rect x="1" y="6.5" width="8.5" height="3.5" rx="0.8" fill="#3f6fb8"/><path d="M2.6 7.5v1.6M5.2 7.5v1.6M7.8 7.5v1.6" stroke="#e8eef8" stroke-width="0.8"/></svg>
<div class="t" style="left:370.5px;top:258.60px;color:#1e1e1e;letter-spacing:-0.267px;">icons</div>
<div style="position:absolute;left:345px;top:260px;width:7px;height:7px;border:1px solid #777;background:#fff;"></div>
<svg style="position:absolute;left:345px;top:260px" width="9" height="9" viewBox="0 0 9 9"><path d="M1.8 4.3l2.2 2.2 3.4-4" fill="none" stroke="#666" stroke-width="1"/></svg>
<svg style="position:absolute;left:356px;top:260px" width="11" height="9" viewBox="0 0 11 9"><path d="M0.5 1.2Q0.5 0.5 1.2 0.5H3.6L4.6 1.5H8.3Q9 1.5 9 2.2V3.5H2.6L0.5 7.8z" fill="#f4dca0" stroke="#d3a756" stroke-width="0.9"/><path d="M0.6 7.9L2.5 3.6H10.5L8.6 7.9z" fill="#f2c66a" stroke="#d3a756" stroke-width="0.9"/></svg>
<svg style="position:absolute;left:333px;top:261px" width="5" height="7" viewBox="0 0 5 7"><path d="M1 0.5l3 3-3 3" fill="none" stroke="#dadada" stroke-width="1"/></svg>
<div class="t" style="left:370.5px;top:271.80px;color:#1e1e1e;letter-spacing:-0.135px;">libs</div>
<div style="position:absolute;left:345px;top:273px;width:7px;height:7px;border:1px solid #777;background:#fff;"></div>
<div style="position:absolute;left:347px;top:275px;width:5px;height:5px;background:#222;"></div>
<svg style="position:absolute;left:356px;top:273px" width="11" height="9" viewBox="0 0 11 9"><path d="M0.5 1.2Q0.5 0.5 1.2 0.5H3.6L4.6 1.5H8.3Q9 1.5 9 2.2V3.5H2.6L0.5 7.8z" fill="#f4dca0" stroke="#d3a756" stroke-width="0.9"/><path d="M0.6 7.9L2.5 3.6H10.5L8.6 7.9z" fill="#f2c66a" stroke="#d3a756" stroke-width="0.9"/></svg>
<svg style="position:absolute;left:332px;top:275px" width="7" height="5" viewBox="0 0 7 5"><path d="M0.5 0.8l3 3 3-3" fill="none" stroke="#dadada" stroke-width="1"/></svg>
<div class="t" style="left:383px;top:285.00px;color:#1e1e1e;letter-spacing:-0.062px;">cn.com.editor.help.jar</div>
<div style="position:absolute;left:358px;top:286px;width:7px;height:7px;border:1px solid #777;background:#fff;"></div>
<svg style="position:absolute;left:358px;top:286px" width="9" height="9" viewBox="0 0 9 9"><path d="M1.8 4.3l2.2 2.2 3.4-4" fill="none" stroke="#666" stroke-width="1"/></svg>
<svg style="position:absolute;left:369px;top:285px" width="11" height="11" viewBox="0 0 11 11"><rect x="0.5" y="0.5" width="10" height="9.5" rx="1" fill="#f2f5fa" stroke="#b0bccb" stroke-width="0.9"/><rect x="0.8" y="5.2" width="4.5" height="1.6" fill="#3a6fc0"/><rect x="0.8" y="6.8" width="4.5" height="1.4" fill="#3aa050"/><rect x="0.8" y="8.2" width="4.5" height="1.6" fill="#e0602a"/><circle cx="6.7" cy="3.3" r="1.6" fill="#f0a838"/><path d="M6 4.8v3" stroke="#8aa8d8" stroke-width="1"/><circle cx="8" cy="8" r="1.5" fill="#a8b8cc"/></svg>
<div class="t" style="left:383px;top:298.20px;color:#1e1e1e;letter-spacing:-0.195px;">org.eclipse.help_3.5.100.v20110426.jar</div>
<div style="position:absolute;left:358px;top:300px;width:7px;height:7px;border:1px solid #777;background:#fff;"></div>
<svg style="position:absolute;left:358px;top:300px" width="9" height="9" viewBox="0 0 9 9"><path d="M1.8 4.3l2.2 2.2 3.4-4" fill="none" stroke="#666" stroke-width="1"/></svg>
<svg style="position:absolute;left:369px;top:298px" width="11" height="11" viewBox="0 0 11 11"><rect x="0.5" y="0.5" width="10" height="9.5" rx="1" fill="#f2f5fa" stroke="#b0bccb" stroke-width="0.9"/><rect x="0.8" y="5.2" width="4.5" height="1.6" fill="#3a6fc0"/><rect x="0.8" y="6.8" width="4.5" height="1.4" fill="#3aa050"/><rect x="0.8" y="8.2" width="4.5" height="1.6" fill="#e0602a"/><circle cx="6.7" cy="3.3" r="1.6" fill="#f0a838"/><path d="M6 4.8v3" stroke="#8aa8d8" stroke-width="1"/><circle cx="8" cy="8" r="1.5" fill="#a8b8cc"/></svg>
<div class="t" style="left:370.5px;top:311.40px;color:#1e1e1e;letter-spacing:-0.061px;">plugin.xml</div>
<div style="position:absolute;left:345px;top:313px;width:7px;height:7px;border:1px solid #777;background:#fff;"></div>
<svg style="position:absolute;left:345px;top:313px" width="9" height="9" viewBox="0 0 9 9"><path d="M1.8 4.3l2.2 2.2 3.4-4" fill="none" stroke="#666" stroke-width="1"/></svg>
<svg style="position:absolute;left:355px;top:311px" width="11" height="11" viewBox="0 0 11 11"><path d="M2.5 0.5h4.5l2 2v7.5h-6.5z" fill="#fbf6ea" stroke="#d8b070" stroke-width="0.9"/><path d="M0.3 6.5L2.8 3.8h2v5.6h-2z" fill="#6c9ee0" stroke="#3f74c0" stroke-width="0.6"/><path d="M4.8 4.5h1.5l3.4 2.5-3.4 2.5H4.8z" fill="#f2ac34" stroke="#d08a18" stroke-width="0.5"/></svg>
<div class="t" style="left:370.5px;top:324.60px;color:#1e1e1e;letter-spacing:-0.391px;">src</div>
<div style="position:absolute;left:345px;top:326px;width:7px;height:7px;border:1px solid #777;background:#fff;"></div>
<svg style="position:absolute;left:356px;top:326px" width="11" height="9" viewBox="0 0 11 9"><path d="M0.5 1.2Q0.5 0.5 1.2 0.5H3.6L4.6 1.5H8.3Q9 1.5 9 2.2V3.5H2.6L0.5 7.8z" fill="#f4dca0" stroke="#d3a756" stroke-width="0.9"/><path d="M0.6 7.9L2.5 3.6H10.5L8.6 7.9z" fill="#f2c66a" stroke="#d3a756" stroke-width="0.9"/></svg>
<svg style="position:absolute;left:333px;top:327px" width="5" height="7" viewBox="0 0 5 7"><path d="M1 0.5l3 3-3 3" fill="none" stroke="#dadada" stroke-width="1"/></svg>
<div style="position:absolute;left:337.5px;top:269.5px;width:59px;height:14px;box-sizing:border-box;border:2px solid #f0232b;"></div>
<div style="position:absolute;left:675px;top:203px;width:320.5px;height:147px;box-sizing:border-box;border:1px solid #a8b0bb;background:#fff;"></div>
<div class="t" style="left:718px;top:205.80px;color:#1e1e1e;letter-spacing:-0.261px;">.classpath</div>
<div style="position:absolute;left:692px;top:207px;width:7px;height:7px;border:1px solid #777;background:#fff;"></div>
<svg style="position:absolute;left:704px;top:206px" width="10" height="11" viewBox="0 0 10 11"><path d="M1.5 0.5h4.5l2.5 2.5v7.5h-7z" fill="#dfeaf7" stroke="#c8b48e" stroke-width="0.9"/><path d="M6 0.5v2.5h2.5" fill="#f4f0e6" stroke="#c8b48e" stroke-width="0.7"/></svg>
<div class="t" style="left:718px;top:219.00px;color:#1e1e1e;letter-spacing:-0.013px;">.project</div>
<div style="position:absolute;left:692px;top:220px;width:7px;height:7px;border:1px solid #777;background:#fff;"></div>
<svg style="position:absolute;left:704px;top:219px" width="10" height="11" viewBox="0 0 10 11"><path d="M1.5 0.5h4.5l2.5 2.5v7.5h-7z" fill="#dfeaf7" stroke="#c8b48e" stroke-width="0.9"/><path d="M6 0.5v2.5h2.5" fill="#f4f0e6" stroke="#c8b48e" stroke-width="0.7"/></svg>
<div class="t" style="left:718px;top:232.20px;color:#1e1e1e;letter-spacing:-0.144px;">.settings</div>
<div style="position:absolute;left:692px;top:234px;width:7px;height:7px;border:1px solid #777;background:#fff;"></div>
<svg style="position:absolute;left:704px;top:233px" width="11" height="9" viewBox="0 0 11 9"><path d="M0.5 1.2Q0.5 0.5 1.2 0.5H3.6L4.6 1.5H8.3Q9 1.5 9 2.2V3.5H2.6L0.5 7.8z" fill="#f4dca0" stroke="#d3a756" stroke-width="0.9"/><path d="M0.6 7.9L2.5 3.6H10.5L8.6 7.9z" fill="#f2c66a" stroke="#d3a756" stroke-width="0.9"/></svg>
<div class="t" style="left:718px;top:245.40px;color:#1e1e1e;letter-spacing:-0.246px;">META-INF</div>
<div style="position:absolute;left:692px;top:247px;width:7px;height:7px;border:1px solid #777;background:#fff;"></div>
<svg style="position:absolute;left:704px;top:246px" width="11" height="9" viewBox="0 0 11 9"><path d="M0.5 1.2Q0.5 0.5 1.2 0.5H3.6L4.6 1.5H8.3Q9 1.5 9 2.2V3.5H2.6L0.5 7.8z" fill="#f4dca0" stroke="#d3a756" stroke-width="0.9"/><path d="M0.6 7.9L2.5 3.6H10.5L8.6 7.9z" fill="#f2c66a" stroke="#d3a756" stroke-width="0.9"/></svg>
<div class="t" style="left:718px;top:258.60px;color:#1e1e1e;letter-spacing:-0.029px;">bin</div>
<div style="position:absolute;left:692px;top:260px;width:7px;height:7px;border:1px solid #777;background:#fff;"></div>
<svg style="position:absolute;left:704px;top:260px" width="11" height="9" viewBox="0 0 11 9"><path d="M0.5 1.2Q0.5 0.5 1.2 0.5H3.6L4.6 1.5H8.3Q9 1.5 9 2.2V3.5H2.6L0.5 7.8z" fill="#f4dca0" stroke="#d3a756" stroke-width="0.9"/><path d="M0.6 7.9L2.5 3.6H10.5L8.6 7.9z" fill="#f2c66a" stroke="#d3a756" stroke-width="0.9"/></svg>
<div class="t" style="left:718px;top:271.80px;color:#1e1e1e;letter-spacing:0.067px;">build.properties</div>
<div style="position:absolute;left:692px;top:273px;width:7px;height:7px;border:1px solid #777;background:#fff;"></div>
<svg style="position:absolute;left:704px;top:272px" width="10" height="11" viewBox="0 0 10 11"><path d="M1.5 0.5h4.5l2.5 2.5v7.5h-7z" fill="#eef3fa" stroke="#a9b6c8" stroke-width="0.9"/><path d="M3 3h2.5M3 4.8h4" stroke="#b8c8dc" stroke-width="0.8"/><rect x="1" y="6.5" width="8.5" height="3.5" rx="0.8" fill="#3f6fb8"/><path d="M2.6 7.5v1.6M5.2 7.5v1.6M7.8 7.5v1.6" stroke="#e8eef8" stroke-width="0.8"/></svg>
<div class="t" style="left:718px;top:285.00px;color:#1e1e1e;letter-spacing:-0.287px;">icons</div>
<div style="position:absolute;left:692px;top:286px;width:7px;height:7px;border:1px solid #777;background:#fff;"></div>
<svg style="position:absolute;left:704px;top:286px" width="11" height="9" viewBox="0 0 11 9"><path d="M0.5 1.2Q0.5 0.5 1.2 0.5H3.6L4.6 1.5H8.3Q9 1.5 9 2.2V3.5H2.6L0.5 7.8z" fill="#f4dca0" stroke="#d3a756" stroke-width="0.9"/><path d="M0.6 7.9L2.5 3.6H10.5L8.6 7.9z" fill="#f2c66a" stroke="#d3a756" stroke-width="0.9"/></svg>
<div class="t" style="left:718px;top:298.20px;color:#1e1e1e;letter-spacing:-0.26px;">libs</div>
<div style="position:absolute;left:692px;top:300px;width:7px;height:7px;border:1px solid #777;background:#fff;"></div>
<svg style="position:absolute;left:704px;top:299px" width="11" height="9" viewBox="0 0 11 9"><path d="M0.5 1.2Q0.5 0.5 1.2 0.5H3.6L4.6 1.5H8.3Q9 1.5 9 2.2V3.5H2.6L0.5 7.8z" fill="#f4dca0" stroke="#d3a756" stroke-width="0.9"/><path d="M0.6 7.9L2.5 3.6H10.5L8.6 7.9z" fill="#f2c66a" stroke="#d3a756" stroke-width="0.9"/></svg>
<div class="t" style="left:718px;top:311.40px;color:#1e1e1e;letter-spacing:-0.121px;">plugin.xml</div>
<div style="position:absolute;left:692px;top:313px;width:7px;height:7px;border:1px solid #777;background:#fff;"></div>
<svg style="position:absolute;left:703px;top:311px" width="11" height="11" viewBox="0 0 11 11"><path d="M2.5 0.5h4.5l2 2v7.5h-6.5z" fill="#fbf6ea" stroke="#d8b070" stroke-width="0.9"/><path d="M0.3 6.5L2.8 3.8h2v5.6h-2z" fill="#6c9ee0" stroke="#3f74c0" stroke-width="0.6"/><path d="M4.8 4.5h1.5l3.4 2.5-3.4 2.5H4.8z" fill="#f2ac34" stroke="#d08a18" stroke-width="0.5"/></svg>
<div class="t" style="left:718px;top:324.60px;color:#1e1e1e;letter-spacing:-0.291px;">src</div>
<div style="position:absolute;left:692px;top:326px;width:7px;height:7px;border:1px solid #777;background:#fff;"></div>
<svg style="position:absolute;left:704px;top:326px" width="11" height="9" viewBox="0 0 11 9"><path d="M0.5 1.2Q0.5 0.5 1.2 0.5H3.6L4.6 1.5H8.3Q9 1.5 9 2.2V3.5H2.6L0.5 7.8z" fill="#f4dca0" stroke="#d3a756" stroke-width="0.9"/><path d="M0.6 7.9L2.5 3.6H10.5L8.6 7.9z" fill="#f2c66a" stroke="#d3a756" stroke-width="0.9"/></svg>
<div style="position:absolute;left:322px;top:364px;width:682px;height:14.5px;box-sizing:border-box;border:1px solid #dfe6f0;border-bottom:none;border-top-left-radius:3px;border-top-right-radius:3px;background:linear-gradient(#e4ebf5,#f8fafd);"></div>
<svg style="position:absolute;left:327px;top:369px" width="5" height="6" viewBox="0 0 5 6"><path d="M0.5 0.5L4 3 0.5 5.5z" fill="#1f4e8c"/></svg>
<div class="t" style="left:336.5px;top:367.00px;color:#1f4e8c;font-weight:bold;letter-spacing:-0.293px;">Extra Classpath Entries</div>
<div style="position:absolute;left:1008px;top:53px;width:11px;height:334px;background:#f0f0f0;"></div>
<div style="position:absolute;left:1008px;top:108px;width:11px;height:268px;background:#cdcdcd;"></div>
<svg style="position:absolute;left:1010.5px;top:57px" width="7" height="5" viewBox="0 0 7 5"><path d="M0.9 4.2L3 1.8 5.1 4.2" fill="none" stroke="#505050" stroke-width="1.5"/></svg>
<svg style="position:absolute;left:1010.5px;top:380px" width="7" height="5" viewBox="0 0 7 5"><path d="M0.9 0.8L3 3.2 5.1 0.8" fill="none" stroke="#505050" stroke-width="1.5"/></svg>
<div style="position:absolute;left:319px;top:387px;width:700px;height:15px;background:#f0f0f0;border-top:1px solid #d5d5d5;box-sizing:border-box;"></div>
<div style="position:absolute;left:567.5px;top:387px;width:23px;height:15px;background:#fff;"></div>
<div class="t" style="left:320.8px;top:390.00px;color:#222;letter-spacing:-0.159px;">Overview</div>
<div style="position:absolute;left:358.4px;top:388px;width:1px;height:14px;background:#d2d2d2;"></div>
<div class="t" style="left:361.5px;top:390.00px;color:#222;letter-spacing:-0.204px;">Dependencies</div>
<div style="position:absolute;left:418px;top:388px;width:1px;height:14px;background:#d2d2d2;"></div>
<div class="t" style="left:421px;top:390.00px;color:#222;letter-spacing:-0.371px;">Runtime</div>
<div style="position:absolute;left:455px;top:388px;width:1px;height:14px;background:#d2d2d2;"></div>
<div class="t" style="left:456.6px;top:390.00px;color:#222;letter-spacing:-0.281px;">Extensions</div>
<div style="position:absolute;left:499.5px;top:388px;width:1px;height:14px;background:#d2d2d2;"></div>
<div class="t" style="left:502.4px;top:390.00px;color:#222;letter-spacing:-0.224px;">Extension Points</div>
<div style="position:absolute;left:567.4px;top:388px;width:1px;height:14px;background:#d2d2d2;"></div>
<div class="t" style="left:569.3px;top:390.00px;color:#222;letter-spacing:-0.234px;">Build</div>
<div style="position:absolute;left:590.5px;top:388px;width:1px;height:14px;background:#d2d2d2;"></div>
<div class="t" style="left:594px;top:390.00px;color:#222;letter-spacing:-0.395px;">MANIFEST.MF</div>
<div style="position:absolute;left:650.7px;top:388px;width:1px;height:14px;background:#d2d2d2;"></div>
<div class="t" style="left:653px;top:390.00px;color:#222;letter-spacing:-0.141px;">plugin.xml</div>
<div style="position:absolute;left:694.5px;top:388px;width:1px;height:14px;background:#d2d2d2;"></div>
<div class="t" style="left:697px;top:390.00px;color:#222;letter-spacing:0.073px;">build.properties</div>
<div style="position:absolute;left:760.2px;top:388px;width:1px;height:14px;background:#d2d2d2;"></div>
<div style="position:absolute;left:316px;top:406px;width:708px;height:92px;box-sizing:border-box;border:1px solid #c8c8c8;border-right:none;border-bottom:none;border-top-left-radius:5px;background:#fff;"></div>
<div style="position:absolute;left:317px;top:407px;width:707px;height:15px;background:#f0f0f0;"></div>
<svg style="position:absolute;left:467px;top:406px" width="90" height="17" viewBox="0 0 90 17"><path d="M0.5 17V4.5Q0.5 0.5 4.5 0.5H56.5Q61.5 0.5 65.5 5L72 12.5Q75 15.5 79 15.5H90V17z" fill="#fbfbfb"/><path d="M0.5 16V4.5Q0.5 0.5 4.5 0.5H56.5Q61.5 0.5 65.5 5L72 12.5Q75 15.5 79 15.5H90" fill="none" stroke="#c8c8c8" stroke-width="1"/></svg>
<svg style="position:absolute;left:318.5px;top:408.5px" width="12" height="11" viewBox="0 0 12 11"><path d="M3.5 2.5h6l1.5 1.5v6h-7.5z" fill="#f8f8f8" stroke="#c8a878" stroke-width="0.8"/><path d="M5 7.5q2 1.5 4.5-1" stroke="#a8c8e8" fill="none"/><circle cx="3.3" cy="3.3" r="3" fill="#e83a3a" stroke="#b82020" stroke-width="0.5"/><path d="M2 2l2.6 2.6M4.6 2L2 4.6" stroke="#fff" stroke-width="0.9"/></svg>
<svg style="position:absolute;left:375px;top:408.5px" width="11" height="11" viewBox="0 0 11 11"><rect x="1.5" y="1.5" width="8" height="9" fill="#f2f6fb" stroke="#8aa0bc" stroke-width="0.8"/><rect x="3.5" y="0.5" width="4" height="2" fill="#c8d4e4" stroke="#7890b0" stroke-width="0.6"/><path d="M0.8 6l2.4 2.6 4.8-5.4" fill="none" stroke="#2a68c0" stroke-width="1.4"/></svg>
<svg style="position:absolute;left:414px;top:408.5px" width="11" height="11" viewBox="0 0 11 11"><path d="M2.5 0.5h7v10h-7z" fill="#f6f8fb" stroke="#b0bccc" stroke-width="0.8"/><circle cx="4.5" cy="3" r="2" fill="#e03030"/><path d="M8 3.5v4M7 8.5h2" stroke="#a8b8d0" stroke-width="0.9"/><path d="M3 6L5.6 10.6H0.4z" fill="#f0b020" stroke="#c08a10" stroke-width="0.5"/></svg>
<svg style="position:absolute;left:469.5px;top:408.5px" width="11" height="10" viewBox="0 0 11 10"><rect x="0.5" y="0.5" width="9.5" height="7" fill="#dce8f6" stroke="#2f5f9f" stroke-width="1"/><rect x="2" y="2" width="6.5" height="4" fill="#eef4fb"/><path d="M3 3.5h3" stroke="#7a90b0" stroke-width="0.7"/><path d="M3 9.5h5" stroke="#3a6aa8" stroke-width="1.2"/></svg>
<svg style="position:absolute;left:518px;top:409.5px" width="8" height="7" viewBox="0 0 8 7"><path d="M1 0.5l3 2.5 3-2.5 0.8 0.8-2.5 2.7 2.5 2.7-0.8 0.8-3-2.5-3 2.5-0.8-0.8 2.5-2.7-2.5-2.7z" fill="#fff" stroke="#9a9a9a" stroke-width="0.7"/></svg>
<div style="position:absolute;left:317px;top:421.5px;width:707px;height:1px;background:#d4d4d4;"></div>
<div style="position:absolute;left:317px;top:422.5px;width:707px;height:13px;background:#f0f0f0;"></div>
<div style="position:absolute;left:317px;top:435px;width:707px;height:1px;background:#d0d0d0;"></div>
<div class="t" style="left:332px;top:409.00px;color:#222;letter-spacing:0.057px;">Error Log</div>
<svg style="position:absolute;left:370.9px;top:406px" width="6" height="16" viewBox="0 0 6 16"><path d="M1 16V4Q1 0.5 4.5 0.5H6" fill="none" stroke="#cfcfcf" stroke-width="1"/></svg>
<div class="t" style="left:388px;top:409.00px;color:#222;letter-spacing:-0.275px;">Tasks</div>
<svg style="position:absolute;left:410.5px;top:406px" width="6" height="16" viewBox="0 0 6 16"><path d="M1 16V4Q1 0.5 4.5 0.5H6" fill="none" stroke="#cfcfcf" stroke-width="1"/></svg>
<div class="t" style="left:428px;top:409.00px;color:#222;letter-spacing:-0.246px;">Problems</div>
<svg style="position:absolute;left:465.5px;top:406px" width="6" height="16" viewBox="0 0 6 16"><path d="M1 16V4Q1 0.5 4.5 0.5H6" fill="none" stroke="#cfcfcf" stroke-width="1"/></svg>
<div class="t" style="left:482px;top:409.00px;color:#222;letter-spacing:-0.158px;">Console</div>
<div class="t" style="left:319px;top:424.00px;color:#222;letter-spacing:-0.065px;">&lt;terminated&gt; Eclipse Application [Eclipse Application] E:\Program Files\Java\jdk1.6.0_45\bin\javaw.exe (2022-3-11</div>
<div class="t" style="left:771.5px;top:424.00px;color:#222;letter-spacing:-0.151px;">5:24:43)</div>
<svg style="position:absolute;left:758px;top:424px" width="14" height="10" viewBox="0 0 14 10"><g fill="none" stroke="#333" stroke-width="0.9"><path d="M0.5 1.5h5.5M3.2 1.5v8M3.2 4.5l2.5 1.5"/><path d="M8.5 0.8l-1 2.2M8 2.5h5M7.3 5.5h6.2M10.4 2.5v7"/></g></svg>
<div style="position:absolute;left:1022.5px;top:38px;width:1px;height:366px;background:#c8c8c8;"></div>
</div></body></html>
